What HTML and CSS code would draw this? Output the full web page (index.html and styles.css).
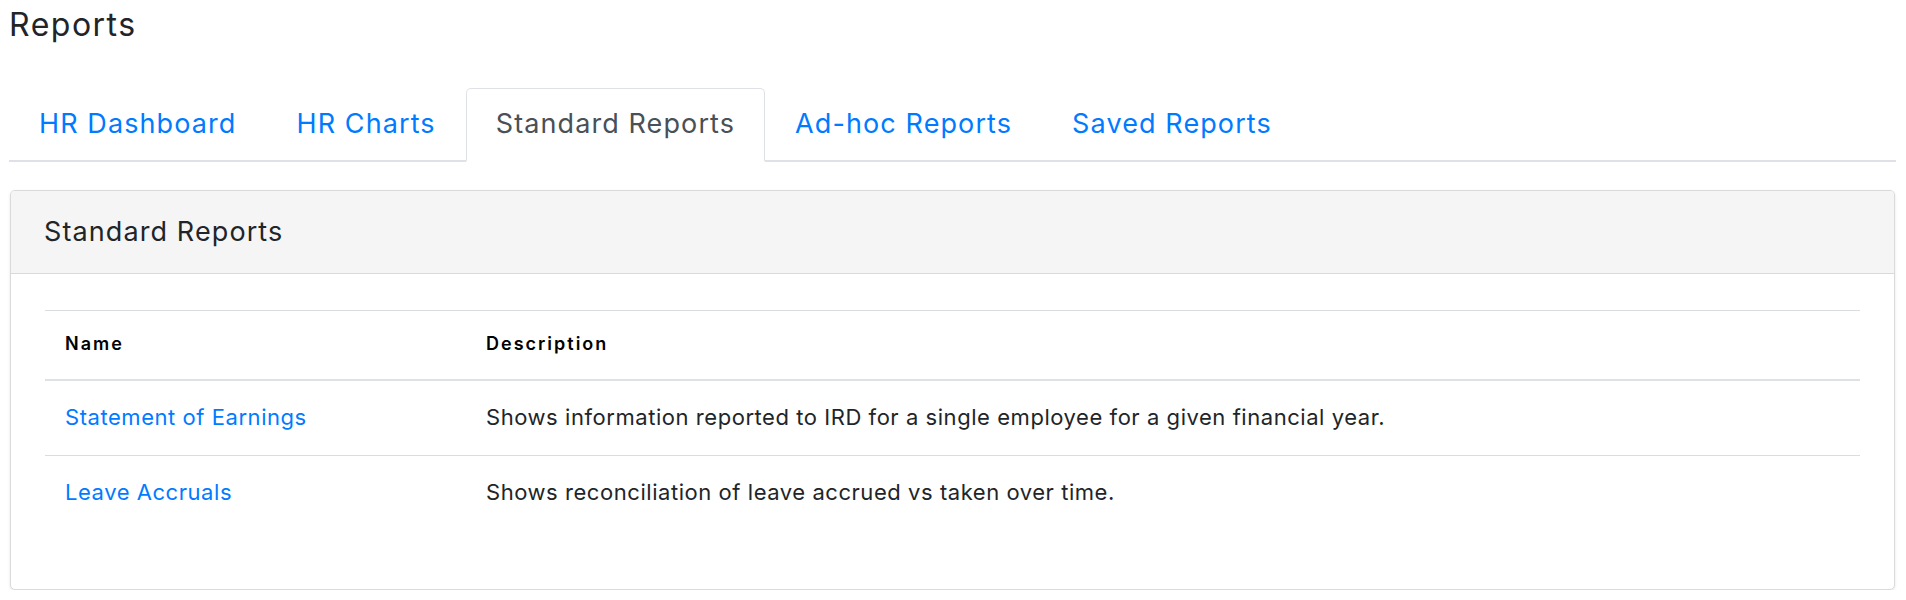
FILE: index.html
```html
<!DOCTYPE html>
<html lang="en">
<head>
<meta charset="utf-8">
<title>Reports</title>
<link rel="stylesheet" href="styles.css">
</head>
<body>
<div class="page">
  <h1 class="page-title">Reports</h1>

  <ul class="tabs">
    <li class="tab"><a class="tab-link" href="#">HR Dashboard</a></li>
    <li class="tab"><a class="tab-link" href="#">HR Charts</a></li>
    <li class="tab"><a class="tab-link active" href="#">Standard Reports</a></li>
    <li class="tab"><a class="tab-link" href="#">Ad-hoc Reports</a></li>
    <li class="tab"><a class="tab-link" href="#">Saved Reports</a></li>
  </ul>

  <section class="card">
    <header class="card-header">
      <h2 class="card-title">Standard Reports</h2>
    </header>
    <div class="card-body">
      <table class="report-table">
        <thead>
          <tr>
            <th class="col-name">Name</th>
            <th>Description</th>
          </tr>
        </thead>
        <tbody>
          <tr>
            <td><a class="report-link" href="#">Statement of Earnings</a></td>
            <td>Shows information reported to IRD for a single employee for a given financial year.</td>
          </tr>
          <tr>
            <td><a class="report-link" href="#">Leave Accruals</a></td>
            <td>Shows reconciliation of leave accrued vs taken over time.</td>
          </tr>
        </tbody>
      </table>
    </div>
  </section>
</div>
</body>
</html>
```
FILE: styles.css
```css
* { box-sizing: border-box; }

html, body {
  margin: 0;
  padding: 0;
  background: #ffffff;
}

body {
  font-family: "Inter", "Noto Sans", sans-serif;
  color: #212529;
}

.page {
  padding: 0 10px 0 9px;
}

.page-title {
  margin: 5px 0 0 0;
  font-size: 32px;
  line-height: 40px;
  font-weight: 400;
  letter-spacing: 1.5px;
  color: #212529;
}

.tabs {
  list-style: none;
  margin: 43px 0 0 0;
  padding: 0;
  display: flex;
  border-bottom: 2px solid #dee2e6;
}

.tab {
  margin-bottom: -2px;
}

.tab-link {
  display: block;
  padding: 17px 29px 18px 29px;
  font-size: 27px;
  line-height: 36px;
  letter-spacing: 1.1px;
  color: #007bff;
  text-decoration: none;
  border: 1px solid transparent;
  border-bottom: 2px solid transparent;
  border-radius: 5px 5px 0 0;
}

.tab-link.active {
  color: #495057;
  background: #ffffff;
  border-color: #dee2e6 #dee2e6 #ffffff;
}

.card {
  margin: 28px 1px 0 1px;
  border: 1px solid #dadada;
  border-radius: 5px;
  background: #ffffff;
  box-shadow: 0 1px 3px rgba(0, 0, 0, 0.10);
  overflow: hidden;
}

.card-header {
  background: #f5f5f5;
  border-bottom: 1px solid #dadada;
  padding: 23px 33px;
}

.card-title {
  margin: 0;
  font-size: 27px;
  line-height: 36px;
  font-weight: 400;
  letter-spacing: 1.1px;
  color: #212529;
}

.card-body {
  padding: 36px 34px 59px 34px;
}

.report-table {
  width: 100%;
  border-collapse: collapse;
  border-top: 1px solid #d9dde1;
}

.report-table th {
  text-align: left;
  padding: 19px 20px 22px 20px;
  font-size: 18px;
  line-height: 27px;
  font-weight: 600;
  letter-spacing: 2px;
  color: #000000;
  border-bottom: 2px solid #dee2e6;
}

.report-table .col-name {
  width: 421px;
}

.report-table td {
  padding: 20px 20px 21px 20px;
  font-size: 22px;
  line-height: 33px;
  letter-spacing: 0.55px;
  color: #212529;
  vertical-align: top;
}

.report-table tbody tr + tr td {
  border-top: 1px solid #d9dde1;
}

.report-link {
  color: #007bff;
  text-decoration: none;
}
```
